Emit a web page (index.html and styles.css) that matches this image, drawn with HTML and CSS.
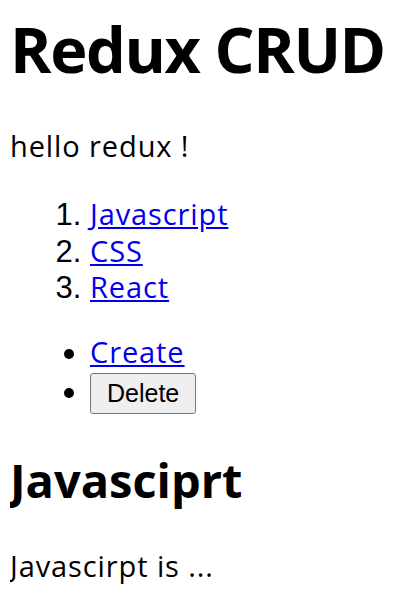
FILE: index.html
```html
<!DOCTYPE html>
<html>
<head>
<meta charset="utf-8">
<title>Redux CRUD</title>
<link rel="stylesheet" href="styles.css">
</head>
<body>
<h1 class="title">Redux CRUD</h1>
<p class="intro">hello redux !</p>
<ol class="topics">
  <li><a href="#">Javascript</a></li>
  <li><a href="#">CSS</a></li>
  <li><a href="#">React</a></li>
</ol>
<ul class="actions">
  <li><a href="#">Create</a></li>
  <li class="del-item"><button class="del-btn" type="button">Delete</button></li>
</ul>
<h2 class="subtitle">Javasciprt</h2>
<p class="desc">Javascirpt is ...</p>
</body>
</html>
```
FILE: styles.css
```css
html, body {
  background: #ffffff;
}
body {
  margin: 0 10px;
  font-family: "Open Sans", "Liberation Sans", sans-serif;
  font-size: 29px;
  line-height: 36px;
  color: #000;
  letter-spacing: 0.9px;
}
.title {
  margin: 17px 0 0;
  font-size: 63px;
  line-height: 64px;
  font-weight: 700;
  letter-spacing: -1.4px;
  white-space: nowrap;
}
.intro {
  margin: 47px 0 0;
}
.topics {
  margin: 32px 0 0;
  padding-left: 80px;
  line-height: 36.5px;
}
.topics li::marker {
  font-family: "Liberation Sans", Arial, sans-serif;
  font-size: 31px;
  letter-spacing: 0;
}
.actions li::marker {
  font-family: "Liberation Sans", Arial, sans-serif;
  font-size: 32px;
  letter-spacing: 0;
}
.actions {
  margin: 28.5px 0 0;
  padding-left: 80px;
  list-style: disc;
}
a {
  color: #0000ee;
  text-decoration: underline;
}
.del-item {
  margin-top: 3px;
}
.del-btn {
  font-family: "Liberation Sans", Arial, sans-serif;
  font-size: 25px;
  letter-spacing: 0;
  height: 41px;
  line-height: 39px;
  padding: 0 16px;
  border: 1px solid #767676;
  border-radius: 3px;
  background: #efefef;
  color: #000;
}
.subtitle {
  margin: 42px 0 0;
  font-size: 47px;
  line-height: 48px;
  font-weight: 700;
  letter-spacing: 0;
  white-space: nowrap;
}
.desc {
  margin: 44px 0 0;
}
```
